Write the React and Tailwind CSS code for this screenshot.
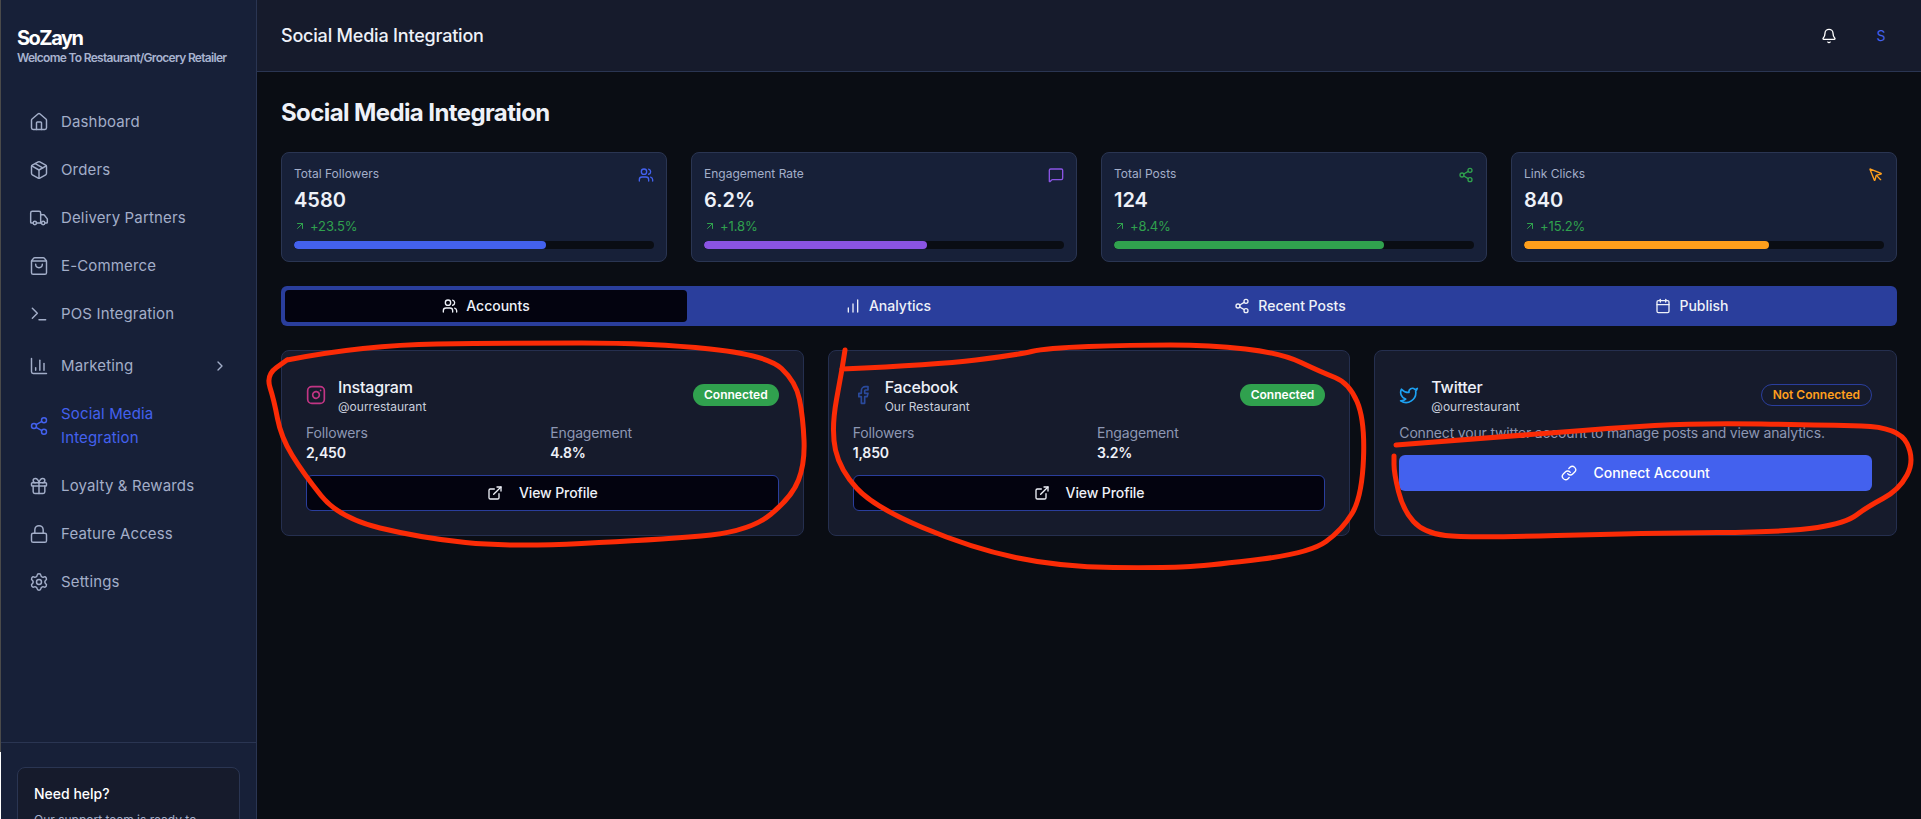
import React from 'react';
import {
  House, Package, Truck, ShoppingBag, Terminal, ChartColumn, ChevronRight, Share2, Gift, Lock, Settings,
  Bell, Users, MessageSquare, MousePointer, ArrowUpRight, ChartNoAxesColumnIncreasing, Calendar,
  Instagram, Facebook, Twitter, ExternalLink, Link,
} from 'lucide-react';

const navTop = [
  { label: 'Dashboard', icon: House },
  { label: 'Orders', icon: Package },
  { label: 'Delivery Partners', icon: Truck },
  { label: 'E-Commerce', icon: ShoppingBag },
  { label: 'POS Integration', icon: Terminal },
];

const navBottom = [
  { label: 'Loyalty & Rewards', icon: Gift },
  { label: 'Feature Access', icon: Lock },
  { label: 'Settings', icon: Settings },
];

const stats = [
  { label: 'Total Followers', value: '4580', change: '+23.5%', icon: Users, iconClass: 'text-[#4361ee]', barClass: 'bg-[#4361ee]', width: '70%' },
  { label: 'Engagement Rate', value: '6.2%', change: '+1.8%', icon: MessageSquare, iconClass: 'text-[#8a54e3]', barClass: 'bg-[#8a54e3]', width: '62%' },
  { label: 'Total Posts', value: '124', change: '+8.4%', icon: Share2, iconClass: 'text-[#30a14e]', barClass: 'bg-[#30a14e]', width: '75%' },
  { label: 'Link Clicks', value: '840', change: '+15.2%', icon: MousePointer, iconClass: 'text-[#ff9f1c]', barClass: 'bg-[#ff9f1c]', width: '68%' },
];

const tabs = [
  { label: 'Accounts', icon: Users, active: true },
  { label: 'Analytics', icon: ChartNoAxesColumnIncreasing },
  { label: 'Recent Posts', icon: Share2 },
  { label: 'Publish', icon: Calendar },
];

const accounts = [
  { name: 'Instagram', handle: '@ourrestaurant', icon: Instagram, iconClass: 'text-[#c13584]', followers: '2,450', engagement: '4.8%' },
  { name: 'Facebook', handle: 'Our Restaurant', icon: Facebook, iconClass: 'text-[#2a4a9c]', followers: '1,850', engagement: '3.2%' },
];

// the red pen marks on the screenshot, points read off the crops
const marks = [
  [[287, 360], [364, 345], [510, 343], [653, 343], [767, 355], [796, 382], [803, 417], [805, 463], [792, 497], [749, 532], [653, 540], [510, 547], [421, 538], [339, 518], [303, 473], [281, 437], [274, 400], [266, 375], [287, 360]],
  [[842, 369], [935, 365], [1017, 355], [1046, 348], [1131, 345], [1210, 345], [1281, 353], [1321, 372], [1349, 383], [1365, 420], [1362, 497], [1342, 530], [1310, 553], [1214, 565], [1167, 568], [1060, 567], [971, 548], [874, 507], [840, 470], [831, 430], [842, 369]],
  [[845, 350], [842, 369]],
  [[1396, 445], [1503, 437], [1610, 428], [1699, 423], [1824, 425], [1899, 427], [1915, 460], [1899, 490], [1867, 507], [1846, 523], [1789, 532], [1646, 533], [1467, 538], [1424, 533], [1403, 510], [1394, 473], [1394, 456]],
];

const smoothPath = (pts) => {
  let d = `M${pts[0][0]} ${pts[0][1]}`;
  for (let i = 1; i < pts.length - 1; i++) {
    const mx = (pts[i][0] + pts[i + 1][0]) / 2;
    const my = (pts[i][1] + pts[i + 1][1]) / 2;
    d += ` Q${pts[i][0]} ${pts[i][1]} ${mx} ${my}`;
  }
  const last = pts[pts.length - 1];
  return `${d} L${last[0]} ${last[1]}`;
};

const NavItem = ({ item, active, chevron }) => {
  const Icon = item.icon;
  return (
    <div className={`flex items-center gap-3 py-3 text-[15px] leading-6 tracking-[0.01em] ${active ? 'text-[#4361ee]' : 'text-[#a3aec9]'}`}>
      <Icon className="w-5 h-5 shrink-0" strokeWidth={1.75} />
      <span className="flex-1">{item.label}</span>
      {chevron && <ChevronRight className="w-4 h-4 shrink-0" />}
    </div>
  );
};

const Sidebar = () => (
  <aside className="w-[256px] h-screen shrink-0 flex flex-col overflow-hidden bg-[#172038] border-r border-[#2a3552]">
    <div className="h-[98px] shrink-0 pt-[26px] pl-4">
      <div className="text-xl leading-6 font-bold tracking-[-1.5px] text-white">SoZayn</div>
      <div className="text-xs leading-4 font-semibold tracking-[-0.7px] text-[#a8b3cf]">Welcome To Restaurant/Grocery Retailer</div>
    </div>
    <nav className="h-[644px] shrink-0 px-7">
      {navTop.map((item) => <NavItem key={item.label} item={item} />)}
      <div className="mt-1">
        <NavItem item={{ label: 'Marketing', icon: ChartColumn }} chevron />
      </div>
      <NavItem item={{ label: 'Social Media Integration', icon: Share2 }} active />
      {navBottom.map((item) => <NavItem key={item.label} item={item} />)}
    </nav>
    <div className="shrink-0 border-t border-[#2a3552] pt-6 px-4">
      <div className="rounded-lg border border-[#2a3552] bg-[#161b2c] p-4">
        <div className="text-sm font-medium text-white">Need help?</div>
        <div className="mt-2 text-xs text-[#a3aec9]">Our support team is ready to assist you.</div>
      </div>
    </div>
  </aside>
);

const StatCard = ({ stat }) => {
  const Icon = stat.icon;
  return (
    <div className="rounded-lg border border-[#2a3552] bg-[#172038] p-3">
      <div className="h-4 flex items-start justify-between">
        <span className="text-xs leading-[18px] text-[#a3aec9]">{stat.label}</span>
        <Icon className={`w-4 h-4 mt-0.5 ${stat.iconClass}`} />
      </div>
      <div className="mt-[5px] text-xl font-semibold text-[#eef1f8]">{stat.value}</div>
      <div className="mt-1 flex items-center gap-1 text-[13px] leading-4 tracking-[-0.1px] text-[#30a14e]">
        <ArrowUpRight className="w-3 h-3" />
        <span>{stat.change}</span>
      </div>
      <div className="mt-[7px] h-2 rounded-full bg-[#0a0d14] overflow-hidden">
        <div className={`h-full rounded-full ${stat.barClass}`} style={{ width: stat.width }} />
      </div>
    </div>
  );
};

const AccountHeader = ({ name, handle, icon: Icon, iconClass, badge }) => (
  <div className="flex items-center justify-between mb-2">
    <div className="flex items-center gap-3">
      <Icon className={`w-5 h-5 ${iconClass}`} />
      <div>
        <div className="text-base font-medium tracking-[-0.2px] text-[#eef1f8]">{name}</div>
        <div className="text-xs text-[#c9cfdd]">{handle}</div>
      </div>
    </div>
    {badge}
  </div>
);

const ConnectedBadge = () => (
  <span className="h-[22px] flex items-center rounded-full bg-[#30a14e] px-[11px] text-xs font-semibold text-white">Connected</span>
);

const AccountCard = ({ account }) => (
  <div className="rounded-lg border border-[#252f4f] bg-[#161b2c] p-6">
    <AccountHeader {...account} badge={<ConnectedBadge />} />
    <div className="grid grid-cols-2 gap-4 tracking-[-0.15px]">
      <div>
        <div className="text-sm text-[#8d97b3]">Followers</div>
        <div className="text-sm font-semibold text-[#eef1f8]">{account.followers}</div>
      </div>
      <div>
        <div className="text-sm text-[#8d97b3]">Engagement</div>
        <div className="text-sm font-semibold text-[#eef1f8]">{account.engagement}</div>
      </div>
    </div>
    <button className="mt-3 w-full h-9 flex items-center justify-center gap-4 rounded-md border border-[#2a3e9c] bg-[#03030f] text-sm font-medium tracking-[-0.1px] text-[#eef1f8]">
      <ExternalLink className="w-4 h-4" />
      View Profile
    </button>
  </div>
);

const TwitterCard = () => (
  <div className="rounded-lg border border-[#252f4f] bg-[#161b2c] p-6">
    <AccountHeader
      name="Twitter"
      handle="@ourrestaurant"
      icon={Twitter}
      iconClass="text-[#1da1f2]"
      badge={<span className="h-[22px] flex items-center rounded-full border border-[#2a3e9c] px-[11px] text-xs font-semibold text-[#ff9f1c]">Not Connected</span>}
    />
    <p className="text-sm tracking-[-0.17px] text-[#8d97b3]">Connect your twitter account to manage posts and view analytics.</p>
    <button className="mt-3 w-full h-9 flex items-center justify-center gap-4 rounded-md bg-[#4361ee] text-sm font-medium text-white">
      <Link className="w-4 h-4" />
      Connect Account
    </button>
  </div>
);

export default function App() {
  return (
    <div className="relative h-screen flex overflow-hidden bg-[#0a0d14] font-['Inter',sans-serif]">
      <div className="w-px shrink-0 flex flex-col">
        <div className="flex-1 bg-[#4a4a4a]" />
        <div className="h-[67px] bg-white" />
      </div>
      <Sidebar />
      <div className="flex-1 min-w-0 flex flex-col">
        <header className="h-[72px] shrink-0 flex items-center justify-between pl-6 pr-5 bg-[#161b2c] border-b border-[#2a3552]">
          <h1 className="text-lg font-medium tracking-[-0.2px] text-[#eef1f8]">Social Media Integration</h1>
          <div className="flex items-center gap-3">
            <div className="w-10 h-10 flex items-center justify-center text-white"><Bell className="w-4 h-4" /></div>
            <div className="w-10 h-10 flex items-center justify-center text-sm text-[#4361ee]">S</div>
          </div>
        </header>
        <main className="flex-1 p-6 flex flex-col gap-6">
          <h2 className="h-8 text-2xl leading-[34px] font-bold tracking-[-0.6px] text-[#eef1f8]">Social Media Integration</h2>
          <div className="grid grid-cols-4 gap-6">
            {stats.map((stat) => <StatCard key={stat.label} stat={stat} />)}
          </div>
          <div className="grid grid-cols-4 h-10 p-1 rounded-md bg-[#2a3e9c]">
            {tabs.map((tab) => {
              const Icon = tab.icon;
              return (
                <div key={tab.label} className={`flex items-center justify-center gap-2 rounded-sm text-sm font-medium text-[#eef1f8] ${tab.active ? 'bg-[#03030f]' : ''}`}>
                  <Icon className="w-4 h-4" />
                  {tab.label}
                </div>
              );
            })}
          </div>
          <div className="grid grid-cols-3 gap-6">
            {accounts.map((account) => <AccountCard key={account.name} account={account} />)}
            <TwitterCard />
          </div>
        </main>
      </div>
      <svg className="absolute inset-0 pointer-events-none" width="1921" height="819" viewBox="0 0 1921 819" fill="none">
        {marks.map((pts, i) => (
          <path key={i} d={smoothPath(pts)} stroke="#fb2b06" strokeWidth="5" strokeLinecap="round" strokeLinejoin="round" />
        ))}
      </svg>
    </div>
  );
}
